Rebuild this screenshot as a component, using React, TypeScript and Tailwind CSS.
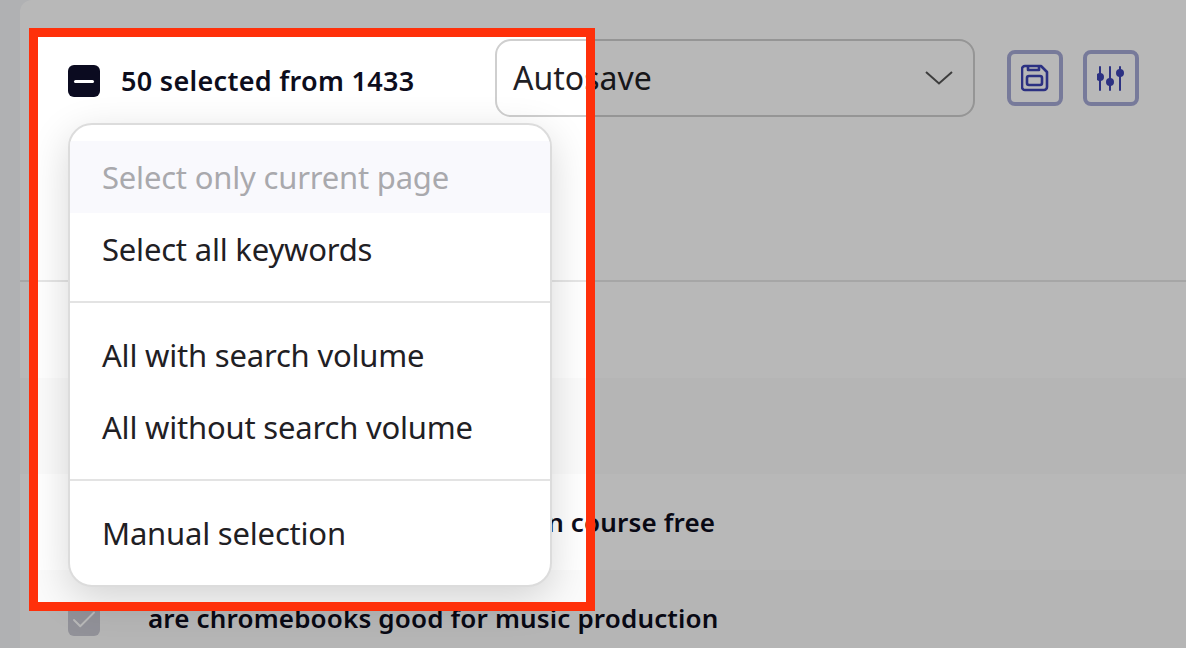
import { Check } from "lucide-react";

const font = "font-['Noto_Sans','Liberation_Sans',sans-serif]";

function MenuItem({ label, muted }: { label: string; muted?: boolean }) {
  return (
    <div
      className={`flex h-[72px] items-center px-8 text-[31px] tracking-[-0.2px] ${
        muted ? "bg-[#f9f9fd] text-[#a9a9ad]" : "text-[#1f2024]"
      }`}
    >
      {label}
    </div>
  );
}

function Row({ label, tint }: { label?: string; tint?: boolean }) {
  return (
    <div className={`flex h-[96px] items-center pl-12 ${tint ? "bg-[#fbfbfb]" : "bg-white"}`}>
      <div className="mt-1 flex h-8 w-8 items-center justify-center rounded-md bg-[#c9c9d3]">
        <Check size={30} strokeWidth={1.5} className="text-white" />
      </div>
      {label && <span className="ml-12 text-[26px] font-semibold tracking-[0.16px] text-[#0d0d1c]">{label}</span>}
    </div>
  );
}

function SaveIcon() {
  return (
    <svg width="28" height="28" viewBox="0 0 28 28" fill="none" stroke="currentColor" strokeWidth="2.6" strokeLinejoin="round">
      <path d="M4 2H20L26 8V23A3 3 0 0 1 23 26H4A3 3 0 0 1 1 23V5A3 3 0 0 1 4 2Z" />
      <path d="M7 2V6H18V2" />
      <rect x="6" y="12" width="15" height="9" rx="2" />
    </svg>
  );
}

function SlidersIcon() {
  return (
    <svg width="28" height="28" viewBox="0 0 28 28" fill="currentColor" stroke="currentColor" strokeWidth="2" strokeLinecap="round">
      <path d="M3 3V26M13 3V26M23 3V26" fill="none" />
      <circle cx="3" cy="13" r="3" />
      <circle cx="13" cy="18" r="3" />
      <circle cx="23" cy="9" r="3" />
    </svg>
  );
}

export default function App() {
  return (
    <div className={`relative flex h-[648px] w-[1186px] overflow-hidden bg-[#f4f5f9] ${font}`}>
      <div className="w-5 shrink-0" />

      <main className="flex-1 overflow-hidden rounded-tl-xl bg-white">
        <header className="h-[282px] border-b-2 border-[#e6e6e6] pl-12 pt-[39px]">
          <div className="flex items-start">
            <div className="mt-[26px] flex w-[427px] items-center">
              <div className="flex h-8 w-8 items-center justify-center rounded-md bg-[#0b0b20]">
                <div className="h-[3px] w-5 rounded bg-white" />
              </div>
              <span className="ml-[21px] text-[27px] leading-8 font-semibold tracking-[0.3px] text-[#0d0d1c]">
                50 selected from 1433
              </span>
            </div>
            <div className="flex h-[78px] w-[480px] items-center justify-between rounded-2xl border-2 border-[#cfcfcf] pl-4 pr-5 text-[32px] text-[#1f2024]">
              Autosave
              <svg width="28" height="14" viewBox="0 0 28 14" fill="none" stroke="#555" strokeWidth="2">
                <path d="M1 1L14 12.5L27 1" />
              </svg>
            </div>
            <div className="ml-8 mt-[11px] flex gap-5">
              <div className="flex h-14 w-14 items-center justify-center rounded-lg border-4 border-[#a6a9d6] text-[#3d44b5]">
                <SaveIcon />
              </div>
              <div className="flex h-14 w-14 items-center justify-center rounded-lg border-4 border-[#a6a9d6] text-[#3d44b5]">
                <SlidersIcon />
              </div>
            </div>
          </div>
        </header>
        <div className="h-[96px]" />
        <Row tint />
        <Row label="ableton online music production course free" />
        <Row label="are chromebooks good for music production" tint />
      </main>

      <div className="absolute left-[68px] top-[123px] w-[484px] overflow-hidden rounded-3xl border-2 border-[#dcdcdc] bg-white py-4 shadow-[0_12px_40px_rgba(0,0,0,0.16)]">
        <MenuItem label="Select only current page" muted />
        <MenuItem label="Select all keywords" />
        <div className="my-4 h-0.5 bg-[#e3e3e3]" />
        <MenuItem label="All with search volume" />
        <MenuItem label="All without search volume" />
        <div className="my-4 h-0.5 bg-[#e3e3e3]" />
        <MenuItem label="Manual selection" />
      </div>

      {/* spotlight frame, dims the rest of the page */}
      <div className="pointer-events-none absolute left-[29px] top-[28px] h-[583px] w-[566px] border-[9px] border-[#ff300a] shadow-[0_0_0_2000px_rgba(0,0,0,0.28)]" />
    </div>
  );
}
